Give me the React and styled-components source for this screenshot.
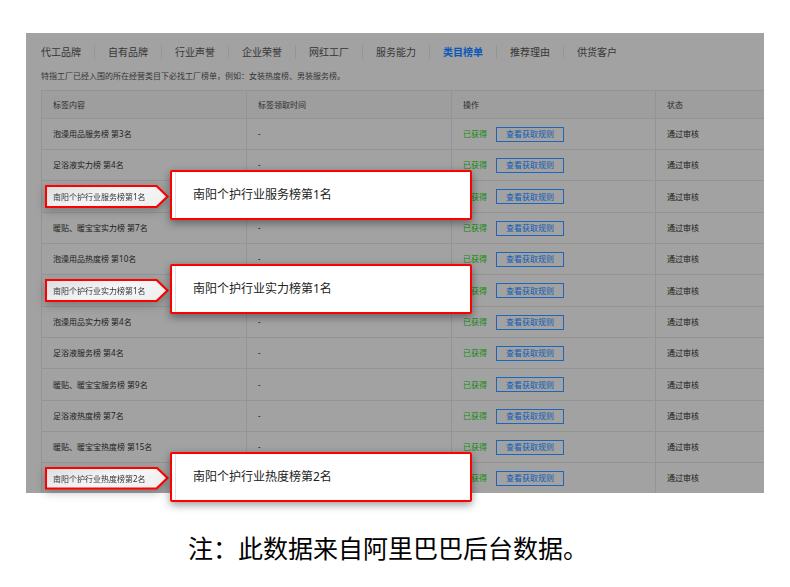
import React from 'react';
import styled, { createGlobalStyle } from 'styled-components';

const GlobalStyle = createGlobalStyle`
  * {
    box-sizing: border-box;
  }

  body {
    margin: 0;
    background: #fff;
    font-family: 'Noto Sans', 'Noto Sans CJK SC', sans-serif;
  }

  button {
    font-family: inherit;
    cursor: pointer;
  }
`;

const Page = styled.main`
  padding: 33px 26px 0;
`;

const Panel = styled.section`
  padding: 9px 0 0 15px;
  background: #a2a2a2;
  color: #2c2c2c;
`;

const Tabs = styled.nav`
  display: flex;
  align-items: center;
  height: 20px;
`;

const Tab = styled.button`
  flex: none;
  height: 14px;
  padding: 0 13px;
  border: 0;
  border-left: 1px solid #959595;
  background: none;
  color: ${({ $active }) => ($active ? '#0b57b8' : '#363636')};
  font-size: 10px;
  font-weight: ${({ $active }) => ($active ? 700 : 400)};
  line-height: 14px;
  white-space: nowrap;

  &:first-child {
    padding-left: 0;
    border-left: 0;
  }
`;

const Description = styled.p`
  margin: 7px 0 8px;
  color: #363636;
  font-size: 8px;
  line-height: 13px;
`;

const Table = styled.table`
  width: 100%;
  border-left: 1px solid #949494;
  border-collapse: separate;
  border-spacing: 0;
  table-layout: fixed;
  font-size: 8px;
  line-height: 12px;
`;

const HeadCell = styled.th`
  width: ${({ $width }) => $width || 'auto'};
  height: 29px;
  padding: 0 11px;
  border: 1px solid #949494;
  border-width: 1px 1px 1px 0;
  background: #9e9e9e;
  font-weight: 400;
  text-align: left;

  &:last-child {
    border-right: 0;
  }
`;

const Cell = styled.td`
  position: relative;
  height: 31px;
  padding: 0 11px;
  border: 1px solid #949494;
  border-width: 0 1px 1px 0;
  color: #202020;
  white-space: nowrap;

  &:last-child {
    border-right: 0;
  }

  tr:nth-child(3n):not(:last-child) > & {
    height: 32px;
  }

  tr:last-child > & {
    height: 30px;
    border-bottom: 0;
  }
`;

const Action = styled.div`
  display: flex;
  align-items: center;
  gap: 9px;
`;

const Obtained = styled.span`
  color: #0f8a09;
`;

const RuleButton = styled.button`
  height: 15px;
  padding: 0 9px;
  border: 1px solid #1f66b8;
  background: none;
  color: #0f5bb5;
  font-size: 8px;
  line-height: 12px;
`;

const TagShadow = styled.div`
  width: 124px;
  margin-left: -8px;
  filter: drop-shadow(0 3px 5px rgba(0, 0, 0, 0.25));
`;

// red arrow with a light one inside it
const Tag = styled.div`
  position: relative;
  z-index: 0;
  height: 23px;
  padding-left: 8px;
  background: #f00;
  clip-path: polygon(0 0, 112px 0, 100% 50%, 112px 100%, 0 100%);
  color: #333;
  line-height: 24px;

  &::before {
    content: '';
    position: absolute;
    z-index: -1;
    inset: 2px 3px 2px 2px;
    background: linear-gradient(160deg, #dedede, #f6f6f6 50%, #eee);
    clip-path: polygon(0 0, 109px 0, 100% 50%, 109px 100%, 0 100%);
  }
`;

const Callout = styled.div`
  position: absolute;
  z-index: 1;
  top: -11px;
  left: 128px;
  display: flex;
  align-items: center;
  width: 302px;
  height: 50px;
  padding-left: 3px;
  border: 2px solid #f00;
  border-radius: 2px;
  background: #fff;
  box-shadow: 0 3px 9px rgba(0, 0, 0, 0.4);
  color: #222;
  font-size: 12px;
  line-height: 18px;
`;

const CalloutText = styled.span`
  display: flex;
  align-items: center;
  align-self: stretch;
  padding-left: 17px;
  border-left: 1px solid #e2e2e2;
`;

const Note = styled.p`
  margin: 37px 0 0;
  padding-right: 14px;
  color: #000;
  font-size: 25px;
  line-height: 36px;
  text-align: center;
`;

const tabs = [
  '代工品牌',
  '自有品牌',
  '行业声誉',
  '企业荣誉',
  '网红工厂',
  '服务能力',
  '类目榜单',
  '推荐理由',
  '供货客户',
];

const rows = [
  { label: '泡澡用品服务榜 第3名' },
  { label: '足浴液实力榜 第4名' },
  { label: '南阳个护行业服务榜第1名', highlighted: true },
  { label: '暖贴、暖宝宝实力榜 第7名' },
  { label: '泡澡用品热度榜 第10名' },
  { label: '南阳个护行业实力榜第1名', highlighted: true },
  { label: '泡澡用品实力榜 第4名' },
  { label: '足浴液服务榜 第4名' },
  { label: '暖贴、暖宝宝服务榜 第9名' },
  { label: '足浴液热度榜 第7名' },
  { label: '暖贴、暖宝宝热度榜 第15名' },
  { label: '南阳个护行业热度榜第2名', highlighted: true },
];

function HighlightedLabel({ label }) {
  return (
    <>
      <TagShadow>
        <Tag>{label}</Tag>
      </TagShadow>
      <Callout>
        <CalloutText>{label}</CalloutText>
      </Callout>
    </>
  );
}

export default function App() {
  return (
    <Page lang="zh-CN">
      <GlobalStyle />
      <Panel>
        <Tabs>
          {tabs.map((tab) => (
            <Tab key={tab} type="button" $active={tab === '类目榜单'}>
              {tab}
            </Tab>
          ))}
        </Tabs>
        <Description>
          特指工厂已经入围的所在经营类目下必找工厂榜单，例如：女装热度榜、男装服务榜。
        </Description>
        <Table>
          <thead>
            <tr>
              <HeadCell $width="205px">标签内容</HeadCell>
              <HeadCell $width="205px">标签领取时间</HeadCell>
              <HeadCell $width="204px">操作</HeadCell>
              <HeadCell>状态</HeadCell>
            </tr>
          </thead>
          <tbody>
            {rows.map(({ label, highlighted }) => (
              <tr key={label}>
                <Cell>
                  {highlighted ? <HighlightedLabel label={label} /> : label}
                </Cell>
                <Cell>{highlighted ? null : '-'}</Cell>
                <Cell>
                  <Action>
                    <Obtained>已获得</Obtained>
                    <RuleButton type="button">查看获取规则</RuleButton>
                  </Action>
                </Cell>
                <Cell>通过审核</Cell>
              </tr>
            ))}
          </tbody>
        </Table>
      </Panel>
      <Note>注：此数据来自阿里巴巴后台数据。</Note>
    </Page>
  );
}
